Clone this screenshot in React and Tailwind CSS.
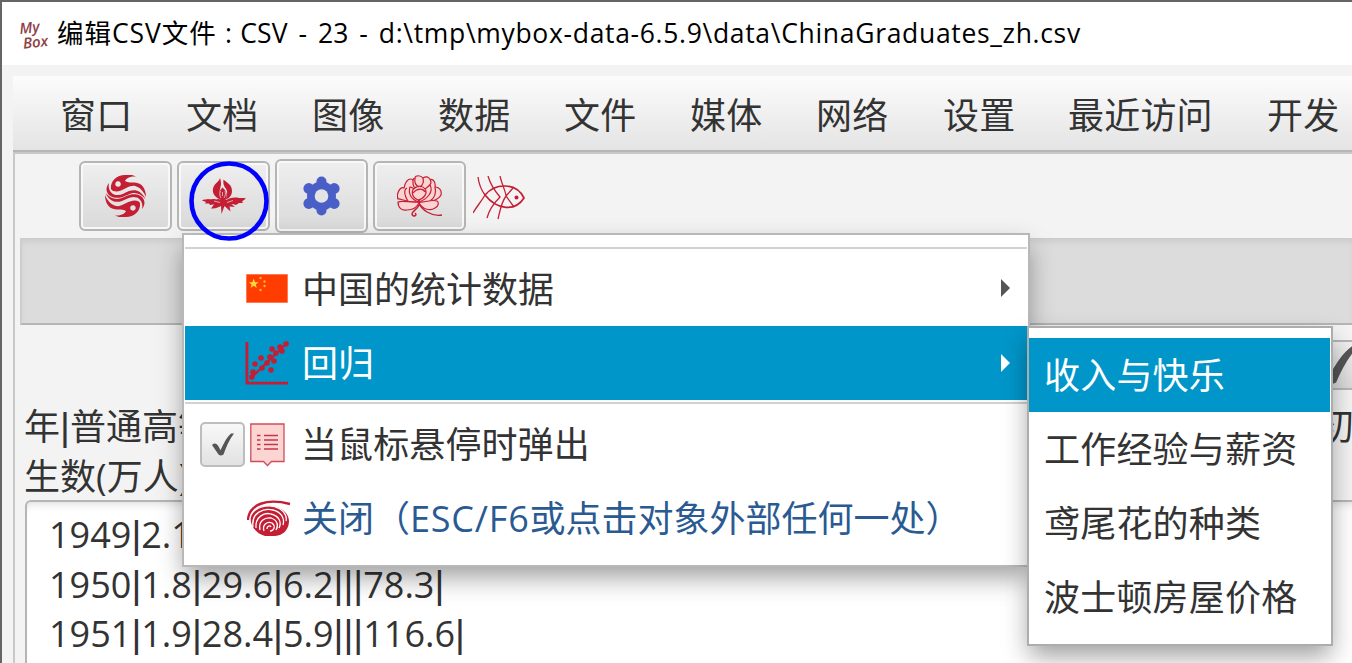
const red = "#c41e34";

function Row({ text }) {
  return (
    <div className="h-[49.5px] whitespace-nowrap leading-[50px]">
      {text.split("").map((c, i) =>
        c === "|" ? (
          <span key={i} className="font-['Liberation_Sans',sans-serif] text-[38px]">|</span>
        ) : (
          <span key={i}>{c}</span>
        )
      )}
    </div>
  );
}

function ToolButton({ children, hot }) {
  return (
    <div
      className={
        hot
          ? "flex h-[74px] w-[93px] items-center justify-center rounded-md border-2 border-[#b5b5b5] bg-linear-to-b from-[#efefef] to-[#d9d9d9] shadow-[inset_0_0_0_2px_#f8f8f8]"
          : "flex h-[70px] w-[93px] items-center justify-center rounded-md border-2 border-[#b5b5b5] bg-linear-to-b from-[#efefef] to-[#d9d9d9] shadow-[inset_0_0_0_2px_#f8f8f8]"
      }
    >
      {children}
    </div>
  );
}

function Waves() {
  const half = (
    <>
      <path fill={red} fillRule="evenodd" d="M6 14C5 6 12 0 20 0H27L31 1.5C26 1 21 3 20 6C24 9 30 6 35 9C39 11 41 17 41 22C38 15 34 12 30 11C25 10 21 14 16 15.5C12 17 8 17 6 14ZM13 6.2a2.8 2.8 0 1 0 .1 0Z" />
      <path fill={red} d="M4 8C3 12 4 17 9 19.5C15 21.5 19 18 24 16C30 14 36 15 40.5 24C36 19 31 17 26 18.500C20 20.500 16 24 9 22.500C2 21 -1 14 4 8Z" />
    </>
  );
  return (
    <svg className="h-[42px] w-[41px]" viewBox="0 0 41 42">
      {half}
      <g transform="rotate(180 20.5 21)">{half}</g>
    </svg>
  );
}

function Flower() {
  return (
    <svg className="h-[36px] w-[44px]" viewBox="0 0 44 36" fill={red}>
      <path d="M18 0C19 3 19.5 6 18.5 9C17.5 13 17 16 18.5 21.5C12 19 9.500 14 11.500 9C13 5 17 4 18 0Z" />
      <path d="M21.5 1.5C24 4 28.500 6 29.5 10C31 15 29 20 23.5 21.500C26 16 25.5 12 23 9.5C21.5 7 21 5 21.5 1.5Z" />
      <path d="M20.5 9.500C25 13 26 18 22.500 23H19C16 18 16.500 13 20.5 9.500Z" />
      <path d="M0 22.500C2 20.500 4 22 6 21C9 22 11 20 14 21.500C17 20 19 22 21 24C17 27 12 26 8 27L7 25.500L3 25.500L4 24Z" />
      <path d="M44 20.500C41 19.500 38 20.500 35 19.500C31 19 26 20 21 24C26 28 31 25 34 27L37 25L41 25L40 23.500Z" />
      <path d="M20 22L13 25L9 30.5C14 31 17 29 19 28L19.500 36L22.500 28L28.500 33.500L27.500 28.500L33 29L23 21Z" />
      <path fill="none" stroke="#e5e5e5" strokeWidth="0.7" d="M18.500 13C17 16 18 18 19 20M23 13C24 16 23 18 22 20M20.500 14V18M12 23L18 24.500M31 22.500L25 24.500" />
    </svg>
  );
}

function Gear() {
  return (
    <svg className="h-[40px] w-[37px]" viewBox="0 0 37 40">
      <g fill="#4a5ec8">
        <circle cx="18.5" cy="20" r="14.5" />
        <circle cx="18.5" cy="5.5" r="5" />
        <circle cx="18.5" cy="34.5" r="5" />
        <circle cx="5.8" cy="12.5" r="5.4" />
        <circle cx="31.2" cy="12.5" r="5.4" />
        <circle cx="5.8" cy="27.5" r="5.4" />
        <circle cx="31.2" cy="27.5" r="5.4" />
      </g>
      <circle cx="18.5" cy="20" r="6.8" fill="#e4e4e4" />
    </svg>
  );
}

function Peony() {
  return (
    <svg className="h-[42px] w-[45px]" viewBox="0 0 45 42" fill="#fcd3d3" stroke={red} strokeWidth="1.2">
      <path d="M21 27C10 28 3 23 1 24C-1 19 3 11 7 13C8 8 10 4 14 4C19 4 18 13 20 16M22 27C33 29 42 24 44 20C45 15 42 12 38 12C39 6 35 3 32 5C28 8 27 14 26 17" />
      <path d="M11 26C8 22 6 15 10 13M33 26C39 22 39 16 38 12M17 12C15 7 16 3 18 3C18 0 24 0 26 3C31 0 34 4 34 8C32 12 30 13 28 15Z" />
      <path d="M21 27C13 28 6 25 1 27C1 33 5 36 10 35C17 35 20 32 22 28C26 35 34 36 38 33C42 31 42 27 40 26C34 24 28 28 21 27Z" />
      <path d="M22 27C14 25 11 18 13 12C17 12 20 18 22 27C30 24 37 17 33 10C27 14 23 20 22 27Z" />
      <path d="M21 25C14 22 14 15 18 13C21 10 26 11 28 14C31 18 27 24 21 25ZM16 18C20 13 26 13 28 17M18 3C17 8 20 11 22 12M26 3C27 7 26 10 23 12" />
      <path fill="none" strokeWidth="1.4" d="M22 28C24 34 34 42 45 40M22 30C20 35 15 36 15 39C16 43 21 40 18 38" />
    </svg>
  );
}

function Fish() {
  return (
    <svg className="h-[44px] w-[52px]" viewBox="0 0 52 44" fill="none" stroke={red} strokeWidth="1.3">
      <path strokeWidth="1.7" d="M12 19C22 7 43 6 51 22C42 36 24 34 12 19" />
      <path d="M5 1C6 9 9 15 12 19C8 26 4 30 0 37M15 0C17 7 21 14 27 21C20 28 16 34 14 42M27 0C29 9 33 16 33 20C28 27 27 35 25 43M40 12L33 20L41 31" />
      <circle cx="43.5" cy="21.5" r="1.4" fill={red} />
    </svg>
  );
}

function Flag() {
  return (
    <svg className="h-[29px] w-[42px]" viewBox="0 0 42 29">
      <rect width="42" height="29" fill="#ff3d00" stroke="#ffb8a5" />
      <path fill="#ffd83a" d="M7.7 4.5L9 8.2H12.6L9.8 10.4L10.8 14L7.7 11.8L4.6 14L5.6 10.4L2.8 8.2H6.4Z" />
      <g fill="#ffb52a">
        <circle cx="14.5" cy="4" r="1.2" />
        <circle cx="18.5" cy="7.5" r="1.2" />
        <circle cx="18.5" cy="12" r="1.2" />
        <circle cx="14.5" cy="16" r="1.2" />
      </g>
    </svg>
  );
}

function Scatter() {
  const dots = [[8, 31], [10, 23], [16, 17], [17, 27], [22, 22], [25, 16], [29, 20], [27, 8], [31, 12], [35, 6], [37, 10], [41, 3], [26, 29], [7, 36]];
  return (
    <svg className="h-[44px] w-[44px]" viewBox="0 0 44 44" fill={red}>
      <path fill="none" stroke={red} strokeWidth="3" d="M2 1V42H43" />
      <path fill="none" stroke="#0096c9" strokeWidth="1" strokeDasharray="1.5 2" d="M4 1V39M5 40.5H43" />
      <path stroke={red} strokeWidth="2.3" d="M5 38L43 1" />
      {dots.map(([x, y]) => (
        <circle key={`${x}-${y}`} cx={x} cy={y} r="2.8" />
      ))}
    </svg>
  );
}

function Note() {
  return (
    <svg className="h-[44px] w-[35px]" viewBox="0 0 35 44">
      <path fill="#fbd5d1" stroke="#cf4c5c" strokeWidth="1.3" d="M.8 1H34V38.5H21.5L17.5 42.5L13.5 38.5H.8Z" />
      <path stroke="#c83449" strokeWidth="1.3" d="M7 12.5H10.5M14 12.5H28M7 17H10.5M14 17H28M7 21.5H10.5M14 21.5H28M7 26H10.5M14 26H28" />
    </svg>
  );
}

function Swirl() {
  return (
    <svg className="h-[37px] w-[44px]" viewBox="0 0 44 37">
      <path fill={red} d="M3 18C5 9 15 5 25 6C36 8 42 14 42 22C41 31 36 35 28 36H18C9 34 4 26 3 18Z" />
      <path fill="none" stroke={red} strokeWidth="2.4" d="M1 20C2 4 20 -2 43 4" />
      <g fill="none" stroke="#fff" strokeWidth="1.3">
        <path d="M3 22C2 6 23 3 33 9C38 12 40 17 39 21" />
        <path d="M6 27C4 12 17 8 26 10C34 12 38 18 36 25" />
        <path d="M9 28C8 17 17 12 24 14C32 16 35 22 32 28" />
        <path d="M13 30C11 21 18 17 24 18C30 20 32 25 29 30" />
        <path d="M17 31C15 25 20 21 25 23C29 26 27 31 23 31" />
        <path d="M20 29C20 26 23 25 24 27" />
      </g>
    </svg>
  );
}

function Check({ className }) {
  return (
    <svg className={className} viewBox="0 0 22 24" preserveAspectRatio="none">
      <path fill="#555" d="M0 12.5C3 10 4 11 6 13L8.5 18C12 10 15 4 19 0.5H22C17 7 14 15 11.5 22.5C9 24 8 23.5 6.5 22.5Z" />
    </svg>
  );
}

const menus = [
  ["窗口", "w-[126px]"], ["文档", "w-[126px]"], ["图像", "w-[126px]"], ["数据", "w-[126px]"], ["文件", "w-[126px]"],
  ["媒体", "w-[126px]"], ["网络", "w-[127px]"], ["设置", "w-[125px]"], ["最近访问", "w-[199px]"], ["开发", "w-[84px]"],
];

export default function App() {
  return (
    <div className="relative flex h-[663px] w-[1352px] flex-col overflow-hidden border-l-2 border-t-2 border-[#656565] bg-[#f3f3f3] font-['Open_Sans','Noto_Sans_CJK_SC',sans-serif] text-[36px] text-[#333]">
      <header className="flex h-[63px] shrink-0 items-center bg-white pl-[18px]">
        <div className="flex h-[34px] w-[37px] shrink-0 -rotate-6 flex-col justify-center font-['Open_Sans',sans-serif] text-[15px] font-semibold italic leading-[15px] text-[#8e4145]">
          <div>My</div>
          <div className="pl-[2px]">Box</div>
        </div>
        <div className="whitespace-pre text-[26.5px] text-black">
          <span className="tracking-[0.95px]">编辑CSV文件</span>
          <span className="[word-spacing:1.4px]"> : </span>
          <span className="tracking-[0.2px] [word-spacing:3.6px]">CSV - 23 - </span>
          <span className="tracking-[0.68px]">d:\tmp\mybox-data-6.5.9\data\ChinaGraduates_zh.csv</span>
        </div>
      </header>

      <nav className="ml-[11px] mt-[11px] flex h-[76px] shrink-0 items-center overflow-hidden border-b-2 border-[#b5b5b5] bg-linear-to-b from-[#fcfcfc] to-[#e4e4e4] pl-[47px] pt-[5px] tracking-[0.2px]">
        {menus.map(([name, w]) => (
          <span key={name} className={`${w} shrink-0 whitespace-nowrap leading-none`}>{name}</span>
        ))}
      </nav>

      <main className="ml-[11px] flex min-h-0 flex-1 flex-col border-l-2 border-t-2 border-[#c8c8c8]">
        <div className="flex h-[84px] shrink-0 items-center gap-[5px] pl-[64px]">
          <ToolButton><Waves /></ToolButton>
          <ToolButton><Flower /></ToolButton>
          <ToolButton hot><Gear /></ToolButton>
          <ToolButton><Peony /></ToolButton>
          <span className="ml-[2px] pt-[3px]"><Fish /></span>
        </div>
        <div className="ml-[5px] h-[87px] shrink-0 border-b-2 border-l-2 border-[#b5b5b5] border-l-[#cecece] bg-[#dcdcdc] shadow-[inset_0_5px_6px_-2px_#c8c8c8]" />
        <div className="flex h-[75px] shrink-0 items-start justify-end pt-[15px]">
          <div className="flex h-[50px] w-[50px] items-center justify-end overflow-hidden border-y-2 border-[#b5b5b5] bg-linear-to-b from-[#efefef] to-[#d9d9d9]">
            <Check className="mr-[-7px] h-[40px] w-[48px] shrink-0" />
          </div>
        </div>
        <div className="flex h-[100px] shrink-0 justify-between overflow-hidden whitespace-nowrap pl-[9px] pt-[2px] leading-[50px]">
          <div>
            <Row text="年|普通高等学校" />
            <Row text="生数(万人)" />
          </div>
          <div className="w-[34px]">初</div>
        </div>
        <div className="ml-[10px] flex-1 overflow-hidden rounded-tl-md border-l-2 border-t-2 border-[#b5b5b5] bg-white pl-[22px] pt-[8px] shadow-[inset_0_8px_8px_-6px_#ddd]">
          <Row text="1949|2.1|11.7" />
          <Row text="1950|1.8|29.6|6.2|||78.3|" />
          <Row text="1951|1.9|28.4|5.9|||116.6|" />
        </div>
      </main>

      <section className="absolute left-[180px] top-[231px] flex h-[334px] w-[848px] flex-col border-2 border-[#b8b8b8] bg-white px-px shadow-[0_12px_24px_-2px_rgba(0,0,0,0.38)]">
        <div className="mt-[12px] h-[3px] shrink-0 border-t-2 border-[#d2d2d2]" />
        <div className="flex h-[76px] shrink-0 items-center pl-[61px] pr-[17px]">
          <Flag />
          <span className="ml-[14px] flex-1 pt-[4px]">中国的统计数据</span>
          <svg className="h-[18px] w-[9px]" viewBox="0 0 9 18"><path fill="#555" d="M0 0L9 9L0 18Z" /></svg>
        </div>
        <div className="flex h-[74px] shrink-0 items-center bg-[#0096c9] pl-[60px] pr-[17px] text-white">
          <Scatter />
          <span className="ml-[13px] flex-1 pt-[2px]">回归</span>
          <svg className="h-[18px] w-[9px]" viewBox="0 0 9 18"><path fill="#fff" d="M0 0L9 9L0 18Z" /></svg>
        </div>
        <div className="mt-[2px] h-[2px] shrink-0 bg-[#d2d2d2]" />
        <div className="flex h-[78px] shrink-0 items-center pl-[15px] pt-[3px]">
          <div className="flex size-[45px] items-center justify-center rounded-[5px] border-2 border-[#bdbdbd] bg-linear-to-b from-[#f8f8f8] to-[#e2e2e2]">
            <Check className="h-[23px] w-[22px]" />
          </div>
          <span className="ml-[5px]"><Note /></span>
          <span className="ml-[16px] tracking-[0.1px]">当鼠标悬停时弹出</span>
        </div>
        <div className="flex h-[72px] shrink-0 items-center pl-[62px] text-[#2a5a92]">
          <Swirl />
          <span className="ml-[11px] whitespace-nowrap pt-[2px]">
            关闭（<span className="tracking-[0.8px]">ESC/F6</span>或点击对象外部任何一处）
          </span>
        </div>
      </section>

      <section className="absolute left-[1025px] top-[324px] flex h-[320px] w-[306px] flex-col border-2 border-[#adadad] bg-white pt-[10px] pr-px tracking-[0.2px] shadow-[0_12px_24px_-2px_rgba(0,0,0,0.38)]">
        <div className="flex h-[74px] items-center bg-[#0096c9] pl-[15px] pt-[2px] text-white">收入与快乐</div>
        <div className="flex h-[74px] items-center pl-[15px] pt-[2px]">工作经验与薪资</div>
        <div className="flex h-[74px] items-center pl-[15px] pt-[2px]">鸢尾花的种类</div>
        <div className="flex h-[74px] items-center pl-[15px] pt-[2px]">波士顿房屋价格</div>
      </section>

      <svg className="absolute left-[187px] top-[159px] size-[80px]" viewBox="0 0 80 80">
        <circle cx="40" cy="40" r="37.5" fill="none" stroke="#00f" strokeWidth="4.6" />
      </svg>
    </div>
  );
}
